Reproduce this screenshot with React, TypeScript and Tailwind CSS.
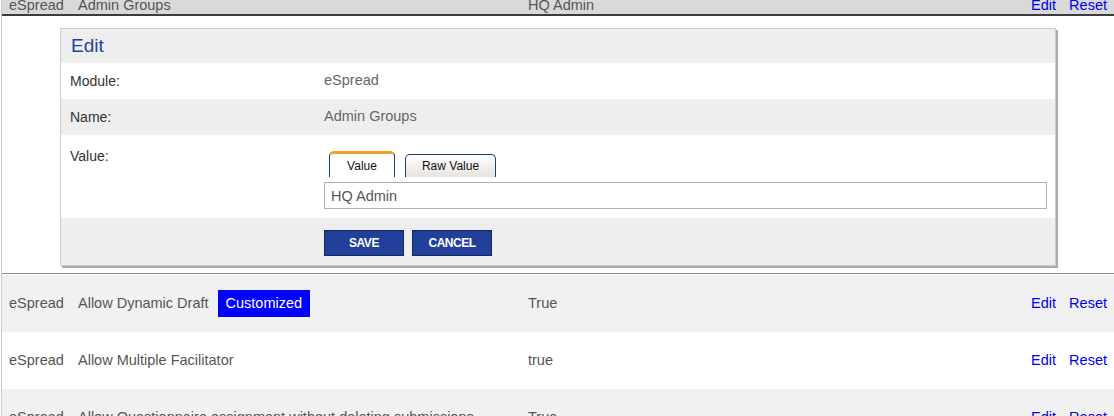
import * as React from "react";

type Setting = {
  module: string;
  name: string;
  value: string;
  customized?: boolean;
};

const ROWS: Setting[] = [
  { module: "eSpread", name: "Allow Dynamic Draft", value: "True", customized: true },
  { module: "eSpread", name: "Allow Multiple Facilitator", value: "true" },
  {
    module: "eSpread",
    name: "Allow Questionnaire assignment without deleting submissions",
    value: "True",
  },
];

function RowCells({ row }: { row: Setting }) {
  return (
    <>
      <div className="w-[76px] shrink-0 pl-[7px]">{row.module}</div>
      <div className="flex w-[450px] shrink-0 items-center whitespace-nowrap">
        <span>{row.name}</span>
        {row.customized ? (
          <span className="ml-[9px] flex h-[27px] items-center bg-[#0000ff] px-[8px] text-white">
            Customized
          </span>
        ) : null}
      </div>
      <div className="flex-1">{row.value}</div>
      <div className="flex gap-[13px] pr-[7px] text-[#0000ee]">
        <a className="cursor-pointer">Edit</a>
        <a className="cursor-pointer">Reset</a>
      </div>
    </>
  );
}

function EditPanel() {
  return (
    <div className="ml-[58px] w-[996px] border border-[#cccccc] bg-white shadow-[2px_2px_0_#aaaaaa]">
      <div className="flex h-[34px] items-center bg-[#eeeeee] pl-[10px] text-[19px] text-[#2541a0]">
        Edit
      </div>
      <div className="flex h-[36px] items-center">
        <div className="w-[263px] pl-[9px] text-[14px] text-[#333]">Module:</div>
        <div className="text-[#666]">eSpread</div>
      </div>
      <div className="flex h-[36px] items-center bg-[#eeeeee]">
        <div className="w-[263px] pl-[9px] text-[14px] text-[#333]">Name:</div>
        <div className="text-[#666]">Admin Groups</div>
      </div>
      <div className="flex h-[83px]">
        <div className="w-[263px] pl-[9px] pt-[11px] text-[14px] text-[#333]">Value:</div>
        <div className="pt-[16px]">
          <div className="ml-[5px] flex items-end gap-[10px] text-[12px] text-[#111]">
            <div className="flex h-[26px] w-[66px] items-center justify-center rounded-t-[5px] border-x border-t-[3px] border-x-[#1c3f78] border-t-[#f0a028] bg-white">
              Value
            </div>
            <div className="flex h-[23px] w-[91px] items-center justify-center rounded-t-[5px] border-x border-t border-[#1c3f78] bg-gradient-to-b from-white to-[#e6e4de]">
              Raw Value
            </div>
          </div>
          <input
            readOnly
            value="HQ Admin"
            className="mt-[5px] block h-[27px] w-[723px] border border-[#b0b0b0] px-[6px] text-[14.5px] text-[#555] outline-none"
          />
        </div>
      </div>
      <div className="flex h-[47px] bg-[#eeeeee] pl-[263px] pt-[12px]">
        <div className="flex gap-[8px]">
          <button
            type="button"
            className="h-[26px] w-[80px] border border-[#15275e] bg-[#22409a] text-[12px] font-bold tracking-[-0.5px] text-white"
          >
            SAVE
          </button>
          <button
            type="button"
            className="h-[26px] w-[80px] border border-[#15275e] bg-[#22409a] text-[12px] font-bold tracking-[-0.5px] text-white"
          >
            CANCEL
          </button>
        </div>
      </div>
    </div>
  );
}

export default function App() {
  return (
    <div className="h-[416px] w-[1114px] overflow-hidden bg-white font-['Liberation_Sans',Arial,sans-serif] text-[14.5px] text-[#555]">
      <div className="ml-px border-l border-[#cccccc]">
        <div className="h-[16px] overflow-hidden border-b-2 border-[#3c3c3c] bg-[#d9d9d9]">
          <div className="-mt-[3px] flex leading-[16px]">
            <RowCells row={{ module: "eSpread", name: "Admin Groups", value: "HQ Admin" }} />
          </div>
        </div>
        <div className="pt-[12px] pb-[7px]">
          <EditPanel />
        </div>
        <div className="border-t border-[#888888] pt-px">
          {ROWS.map((row, i) => (
            <div
              key={row.name}
              className={
                i % 2 === 0
                  ? "flex h-[57px] items-center bg-[#f1f1f1]"
                  : "flex h-[57px] items-center bg-white"
              }
            >
              <RowCells row={row} />
            </div>
          ))}
        </div>
      </div>
    </div>
  );
}
